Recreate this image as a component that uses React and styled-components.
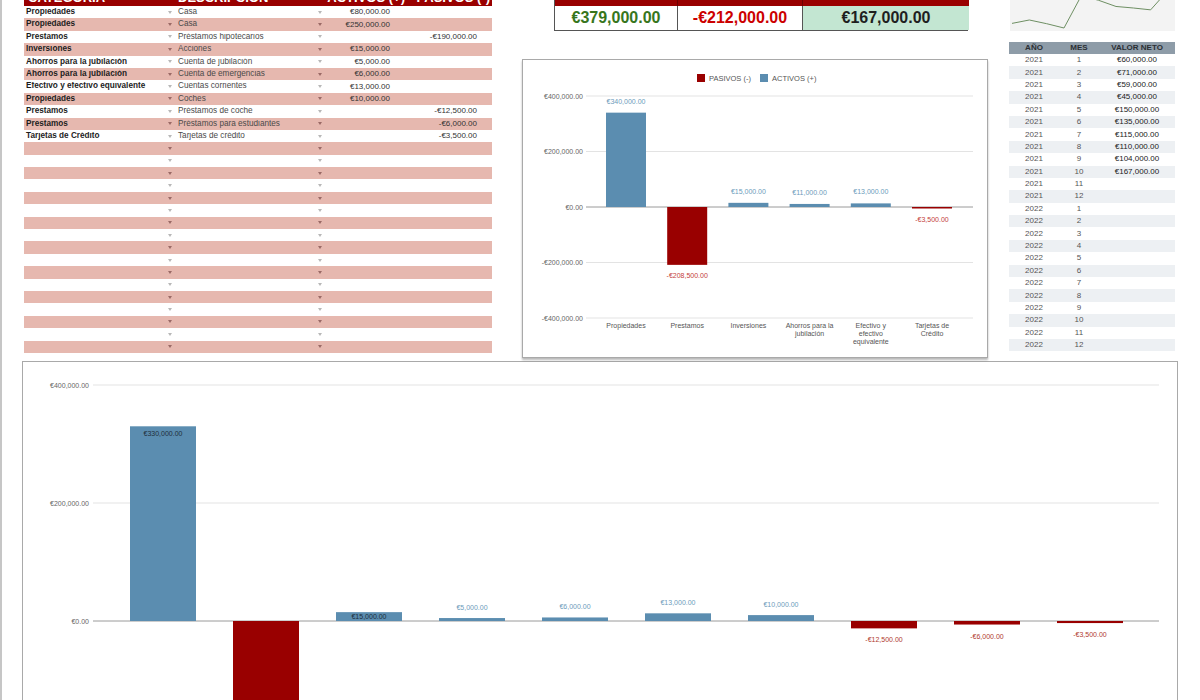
import React from 'react';
import styled, { createGlobalStyle } from 'styled-components';

const GlobalStyle = createGlobalStyle`
  html, body {
    margin: 0;
    padding: 0;
    background: #fff;
  }
  body {
    font-family: "Liberation Sans", Arial, sans-serif;
    overflow: hidden;
  }
`;

const RED = '#990000';
const BLUE = '#5b8db0';

const Page = styled.div`
  height: 700px;
  overflow: hidden;
  box-sizing: border-box;
  border-left: 2px solid #c6c6c6;
  padding-left: 20px;
`;

const TopRow = styled.div`
  display: flex;
  align-items: flex-start;
  margin-top: -20px;
`;

/* ---------- ledger (left table) ---------- */

const Ledger = styled.div`
  width: 468px;
  margin-left: 2px;
`;

const ledgerCols = '150px 151px 85px 82px';

const LedgerHead = styled.div`
  display: grid;
  grid-template-columns: ${ledgerCols};
  align-items: end;
  height: 26px;
  box-sizing: border-box;
  padding-bottom: 2px;
  background: ${RED};
  color: #fff;
  font-size: 13px;
  font-weight: bold;
  line-height: 1;
`;

const HeadCell = styled.div`
  white-space: nowrap;
  text-align: ${(p) => p.$align || 'left'};
  padding: 0 ${(p) => p.$pr || 0}px 0 ${(p) => p.$pl || 0}px;
`;

const LedgerRow = styled.div`
  display: grid;
  grid-template-columns: ${ledgerCols};
  align-items: center;
  height: 12.4px;
  background: ${(p) => (p.$pink ? '#e6b8af' : '#fff')};
  font-size: 8.2px;
  line-height: 1;
  white-space: nowrap;
`;

const PickCell = styled.div`
  display: flex;
  align-items: center;
  justify-content: space-between;
  padding: 0 ${(p) => p.$pr}px 0 ${(p) => p.$pl}px;
  font-weight: ${(p) => (p.$strong ? 700 : 400)};
  color: ${(p) => (p.$strong ? '#1d1d1d' : '#4a4a4a')};
  overflow: hidden;
`;

const Caret = styled.span`
  flex: none;
  width: 0;
  height: 0;
  border-left: 2.5px solid transparent;
  border-right: 2.5px solid transparent;
  border-top: 3px solid ${(p) => (p.$pink ? '#9a6a66' : '#b8b8b8')};
`;

const Amount = styled.div`
  text-align: right;
  padding-right: ${(p) => p.$pr}px;
  font-size: 8px;
  color: #333;
`;

/* ---------- summary ---------- */

const MidCol = styled.div`
  width: 466px;
  margin-left: 30px;
`;

const Summary = styled.div`
  display: grid;
  grid-template-columns: 123px 125px 166px;
  margin: 0 20px 0 32px;
  border: 1px solid #555;
  border-top: none;
`;

const SumHead = styled.div`
  height: 26px;
  background: ${RED};
  color: #fff;
  font-size: 12px;
  font-weight: bold;
  display: flex;
  align-items: flex-start;
  justify-content: center;
  padding-top: 2px;
  box-sizing: border-box;
  border-right: ${(p) => (p.$last ? 'none' : '1px solid #6d0000')};
`;

const SumValue = styled.div`
  height: 24px;
  display: flex;
  align-items: center;
  justify-content: center;
  font-size: 16px;
  font-weight: bold;
  color: ${(p) => p.$color};
  background: ${(p) => p.$bg || '#fff'};
  border-right: ${(p) => (p.$last ? 'none' : '1px solid #555')};
`;

const ChartCard = styled.div`
  margin-top: 28px;
  width: 466px;
  height: 299px;
  box-sizing: border-box;
  border: 1px solid #a9a9a9;
  box-shadow: 0 2px 2px rgba(0, 0, 0, 0.28);
  background: #fff;

  svg {
    display: block;
  }
`;

/* ---------- right column ---------- */

const RightCol = styled.div`
  width: 166px;
  margin-left: 21px;
`;

const Spark = styled.div`
  width: 165px;
  height: 51px;
  margin-left: 1px;
  background: #f3f3f3;

  svg {
    display: block;
  }
`;

const NetTable = styled.div`
  margin-top: 11px;
  font-size: 8px;
  line-height: 1;
`;

const netCols = '50px 40px 76px';

const NetHead = styled.div`
  display: grid;
  grid-template-columns: ${netCols};
  align-items: center;
  height: 12px;
  background: #8e9ca8;
  color: #2b2f33;
  font-weight: bold;
  text-align: center;
`;

const NetRow = styled.div`
  display: grid;
  grid-template-columns: ${netCols};
  align-items: center;
  height: 12.4px;
  text-align: center;
  color: #555;
  background: ${(p) => (p.$shade ? '#edf0f3' : '#fff')};
`;

const NetValue = styled.span`
  color: #1a1a1a;
`;

/* ---------- bottom chart ---------- */

const WideCard = styled.div`
  margin-top: 3px;
  width: 1156px;
  height: 420px;
  box-sizing: border-box;
  border: 1px solid #a9a9a9;
  background: #fff;

  svg {
    display: block;
  }
`;

/* ---------- data ---------- */

const ledger = [
  ['Propiedades', 'Casa', '€80,000.00', ''],
  ['Propiedades', 'Casa', '€250,000.00', ''],
  ['Prestamos', 'Préstamos hipotecarios', '', '-€190,000.00'],
  ['Inversiones', 'Acciones', '€15,000.00', ''],
  ['Ahorros para la jubilación', 'Cuenta de jubilación', '€5,000.00', ''],
  ['Ahorros para la jubilación', 'Cuenta de emergencias', '€6,000.00', ''],
  ['Efectivo y efectivo equivalente', 'Cuentas corrientes', '€13,000.00', ''],
  ['Propiedades', 'Coches', '€10,000.00', ''],
  ['Prestamos', 'Préstamos de coche', '', '-€12,500.00'],
  ['Prestamos', 'Préstamos para estudiantes', '', '-€6,000.00'],
  ['Tarjetas de Crédito', 'Tarjetas de crédito', '', '-€3,500.00'],
];
while (ledger.length < 28) ledger.push(['', '', '', '']);

const groups = [
  { lines: ['Propiedades'], value: 340000, text: '€340,000.00' },
  { lines: ['Prestamos'], value: -208500, text: '-€208,500.00' },
  { lines: ['Inversiones'], value: 15000, text: '€15,000.00' },
  { lines: ['Ahorros para la', 'jubilación'], value: 11000, text: '€11,000.00' },
  { lines: ['Efectivo y', 'efectivo', 'equivalente'], value: 13000, text: '€13,000.00' },
  { lines: ['Tarjetas de', 'Crédito'], value: -3500, text: '-€3,500.00' },
];

const items = [
  { value: 330000, text: '€330,000.00' },
  { value: -190000, text: '-€190,000.00' },
  { value: 15000, text: '€15,000.00' },
  { value: 5000, text: '€5,000.00' },
  { value: 6000, text: '€6,000.00' },
  { value: 13000, text: '€13,000.00' },
  { value: 10000, text: '€10,000.00' },
  { value: -12500, text: '-€12,500.00' },
  { value: -6000, text: '-€6,000.00' },
  { value: -3500, text: '-€3,500.00' },
];

const netWorth = [60000, 71000, 59000, 45000, 150000, 135000, 115000, 110000, 104000, 167000];

const euro = (v) =>
  '€' + v.toLocaleString('en-US', { minimumFractionDigits: 2, maximumFractionDigits: 2 });

const months = [];
[2021, 2022].forEach((y) => {
  for (let m = 1; m <= 12; m++) months.push({ y, m });
});

/* ---------- charts ---------- */

const GroupChart = () => {
  const zero = 147;
  const k = 111 / 400000;
  const ticks = [
    ['€400,000.00', 36],
    ['€200,000.00', 91.5],
    ['€0.00', 147],
    ['-€200,000.00', 202.5],
    ['-€400,000.00', 258],
  ];
  return (
    <svg width="464" height="297" fontFamily="Liberation Sans, Arial, sans-serif">
      <rect x="174" y="14" width="8" height="8" fill={RED} />
      <text x="186" y="21" fontSize="7.5" fill="#555">PASIVOS (-)</text>
      <rect x="237" y="14" width="8" height="8" fill={BLUE} />
      <text x="249" y="21" fontSize="7.5" fill="#555">ACTIVOS (+)</text>
      {ticks.map(([label, y]) => (
        <g key={label}>
          <line x1="63" x2="450" y1={y} y2={y} stroke={y === zero ? '#9a9a9a' : '#e3e3e3'} strokeWidth="1" />
          <text x="60" y={y + 2.5} fontSize="7" fill="#666" textAnchor="end">{label}</text>
        </g>
      ))}
      {groups.map((g, i) => {
        const cx = 103 + 61.2 * i;
        const h = Math.max(Math.abs(g.value) * k, 1.5);
        const pos = g.value > 0;
        const y = pos ? zero - h : zero;
        return (
          <g key={i}>
            <rect x={cx - 20} y={y} width="40" height={h} fill={pos ? BLUE : RED} />
            <text
              x={cx}
              y={pos ? y - 9 : zero + h + 13}
              fontSize="7"
              fill={pos ? '#6c9bbb' : '#c4413a'}
              textAnchor="middle"
            >
              {g.text}
            </text>
            {g.lines.map((l, j) => (
              <text key={l} x={cx} y={267.5 + j * 8} fontSize="7" fill="#555" textAnchor="middle">
                {l}
              </text>
            ))}
          </g>
        );
      })}
    </svg>
  );
};

const ItemChart = () => {
  const zero = 259;
  const k = 118 / 200000;
  const ticks = [
    ['€400,000.00', 23],
    ['€200,000.00', 141],
    ['€0.00', 259],
    ['-€200,000.00', 377],
  ];
  return (
    <svg width="1154" height="418" fontFamily="Liberation Sans, Arial, sans-serif">
      {ticks.map(([label, y]) => (
        <g key={label}>
          <line x1="70" x2="1136" y1={y} y2={y} stroke={y === zero ? '#9a9a9a' : '#e3e3e3'} strokeWidth="1" />
          <text x="66" y={y + 2.5} fontSize="7" fill="#666" textAnchor="end">{label}</text>
        </g>
      ))}
      {items.map((it, i) => {
        const cx = 140 + 103 * i;
        const h = Math.abs(it.value) * k;
        const pos = it.value > 0;
        const y = pos ? zero - h : zero;
        const inside = pos && h >= 8.5;
        let ty;
        if (inside) ty = y + (h > 20 ? 10 : 6.5);
        else if (pos) ty = y - 8;
        else ty = zero + h + 14;
        return (
          <g key={i}>
            <rect x={cx - 33} y={y} width="66" height={h} fill={pos ? BLUE : RED} />
            <text
              x={cx}
              y={ty}
              fontSize="7"
              fill={inside ? '#1f2d3a' : pos ? '#6c9bbb' : '#b03a2e'}
              textAnchor="middle"
            >
              {it.text}
            </text>
          </g>
        );
      })}
    </svg>
  );
};

const Sparkline = () => {
  const pts = netWorth
    .map((v, i) => `${2 + 17.33 * i},${48 - (v - 45000) * 0.0003077}`)
    .join(' ');
  return (
    <svg width="165" height="51">
      <polyline points={pts} fill="none" stroke="#6e8f63" strokeWidth="1" />
    </svg>
  );
};

export default function App() {
  return (
    <>
      <GlobalStyle />
      <Page>
        <TopRow>
          <Ledger>
            <LedgerHead>
              <HeadCell $pl={4}>CATEGORÍA</HeadCell>
              <HeadCell $pl={4}>DESCRIPCIÓN</HeadCell>
              <HeadCell $align="right" $pr={5}>ACTIVOS (+)</HeadCell>
              <HeadCell $align="right" $pr={2}>PASIVOS (-)</HeadCell>
            </LedgerHead>
            {ledger.map(([cat, desc, plus, minus], i) => {
              const pink = i % 2 === 1;
              return (
                <LedgerRow key={i} $pink={pink}>
                  <PickCell $strong $pl={2} $pr={2.5}>
                    <span>{cat}</span>
                    <Caret $pink={pink} />
                  </PickCell>
                  <PickCell $pl={4} $pr={3}>
                    <span>{desc}</span>
                    <Caret $pink={pink} />
                  </PickCell>
                  <Amount $pr={20}>{plus}</Amount>
                  <Amount $pr={15}>{minus}</Amount>
                </LedgerRow>
              );
            })}
          </Ledger>

          <MidCol>
            <Summary>
              <SumHead>ACTIVOS</SumHead>
              <SumHead>PASIVOS</SumHead>
              <SumHead $last>VALOR NETO</SumHead>
              <SumValue $color="#38761d">€379,000.00</SumValue>
              <SumValue $color="#cc0000">-€212,000.00</SumValue>
              <SumValue $last $color="#1f1f1f" $bg="#c3e6d2">€167,000.00</SumValue>
            </Summary>
            <ChartCard>
              <GroupChart />
            </ChartCard>
          </MidCol>

          <RightCol>
            <Spark>
              <Sparkline />
            </Spark>
            <NetTable>
              <NetHead>
                <span>AÑO</span>
                <span>MES</span>
                <span>VALOR NETO</span>
              </NetHead>
              {months.map((r, i) => (
                <NetRow key={i} $shade={i % 2 === 1}>
                  <span>{r.y}</span>
                  <span>{r.m}</span>
                  <NetValue>{netWorth[i] !== undefined ? euro(netWorth[i]) : ''}</NetValue>
                </NetRow>
              ))}
            </NetTable>
          </RightCol>
        </TopRow>

        <WideCard>
          <ItemChart />
        </WideCard>
      </Page>
    </>
  );
}
